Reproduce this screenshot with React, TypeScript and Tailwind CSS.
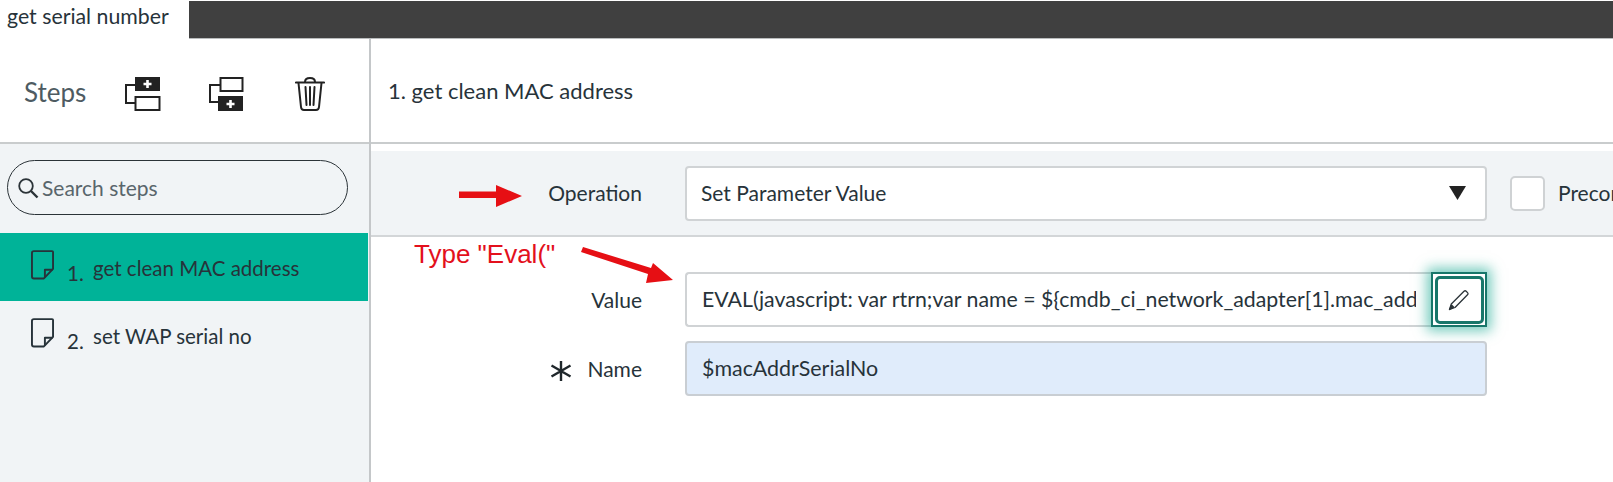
import type { ReactNode } from 'react';

const FONT = "font-['Lato','Noto_Sans',sans-serif]";

function InsertAbove() {
  return (
    <svg width="36" height="34" viewBox="0 0 36 34" fill="none" stroke="#222" strokeWidth="2">
      <rect x="10" y="0" width="25" height="14" fill="#222" stroke="none" />
      <path d="M22.500 3v8M18.500 7h8" stroke="#fff" strokeWidth="2.600" />
      <rect x="10.500" y="20" width="24" height="13" />
      <path d="M10 8H1v18h9" />
    </svg>
  );
}

function InsertBelow() {
  return (
    <svg width="36" height="34" viewBox="0 0 36 34" fill="none" stroke="#222" strokeWidth="2">
      <rect x="11.500" y="1" width="22" height="13" />
      <rect x="9" y="19" width="25" height="15" fill="#222" stroke="none" />
      <path d="M21.500 23v8M17.500 27h8" stroke="#fff" strokeWidth="2.600" />
      <path d="M11 8H1v17h8" />
    </svg>
  );
}

function Trash() {
  return (
    <svg width="30" height="34" viewBox="0 0 30 34" fill="none" stroke="#222" strokeWidth="2" strokeLinecap="round" strokeLinejoin="round">
      <path d="M1 5.500h28" strokeWidth="2.200" />
      <path d="M10 5C10 2 12 1 15 1s5 1 5 4" />
      <path d="M3.500 6l2.500 24c.2 2 1.300 3 3 3h12c1.700 0 2.800-1 3-3l2.500-24" />
      <path d="M10.500 10l1 18M15 10v18M19.500 10l-1 18" />
    </svg>
  );
}

function PageIcon() {
  return (
    <svg width="23" height="30" viewBox="0 0 24 31" fill="none" stroke="#27333a" strokeWidth="2" strokeLinejoin="round">
      <path d="M3 1h19a1 1 0 0 1 1 1v17.500L13.500 29.500H3a2 2 0 0 1-2-2V3a2 2 0 0 1 2-2z" />
      <path d="M22.500 20.500h-8v8" />
    </svg>
  );
}

function SearchIcon() {
  return (
    <svg width="22" height="22" viewBox="0 0 22 22" fill="none" stroke="#2b3338" strokeWidth="1.800">
      <circle cx="9" cy="9" r="6.800" />
      <path d="M14 14l6.500 6.500" strokeWidth="2.400" />
    </svg>
  );
}

function Pencil() {
  return (
    <svg width="22" height="22" viewBox="0 0 22 22" fill="none" stroke="#2b3338" strokeWidth="1.300" strokeLinejoin="round">
      <path d="M1.500 20.500l1.800-5.500L16 2.300c.7-.7 1.500-.7 2.200 0l1.300 1.300c.7.7.7 1.500 0 2.200L7 18.500z" />
      <path d="M1.500 20.500l2.200-4.300 2 2z" fill="#2b3338" />
    </svg>
  );
}

function RequiredMark() {
  return (
    <svg width="22" height="20" viewBox="0 0 22 20" fill="none" stroke="#1f272b" strokeWidth="2.400" className="mt-[5px]">
      <path d="M11 0v20M1.500 4.500l19 11M20.500 4.500l-19 11" />
    </svg>
  );
}

function Step({ n, label, active }: { n: string; label: string; active?: boolean }) {
  return (
    <div className={`flex h-[68px] w-[368px] items-start pl-[31px] pt-[17px] text-[20.500px] text-[#27333a] ${active ? 'bg-[#00b398]' : ''}`}>
      <PageIcon />
      <span className="ml-[13px] mt-[8px] w-[26px]">{n}</span>
      <span className="mt-[3px] whitespace-nowrap">{label}</span>
    </div>
  );
}

function FieldRow({ label, required, className, children }: { label: string; required?: boolean; className?: string; children: ReactNode }) {
  return (
    <div className={`flex items-center ${className ?? ''}`}>
      <div className="flex w-[271px] shrink-0 items-center justify-end gap-[15px] text-[21px] text-[#27333a]">
        {required && <RequiredMark />}
        <span>{label}</span>
      </div>
      <div className="ml-[43px] flex min-w-0">{children}</div>
    </div>
  );
}

export default function App() {
  return (
    <div className={`relative flex h-[482px] w-[1613px] flex-col overflow-hidden bg-white ${FONT}`}>
      <div className="flex h-[39px] shrink-0">
        <div className="flex w-[189px] items-start pl-[7px] pt-[1px] text-[21.300px] text-[#27333a]">get serial number</div>
        <div className="mt-[1px] flex-1 border-b border-[#b9bcbd] bg-[#404040]" />
      </div>

      <div className="flex min-h-0 flex-1">
        <div className="flex w-[371px] shrink-0 flex-col border-r-2 border-[#c4c7c9]">
          <div className="flex h-[105px] shrink-0 items-center border-b-2 border-[#c9cccd] pl-[24px] pt-[6px]">
            <span className="w-[101px] pb-[3px] text-[26px] text-[#4e5b62]">Steps</span>
            <InsertAbove />
            <span className="w-[48px]" />
            <InsertBelow />
            <span className="w-[50px]" />
            <Trash />
          </div>
          <div className="flex-1 bg-[#f1f4f6] pt-[16px]">
            <div className="ml-[7px] flex h-[55px] w-[341px] items-center gap-[3px] rounded-full border-[1.500px] border-[#2b3338] pl-[9px] text-[21px] text-[#59666c]">
              <SearchIcon />
              <span className="pt-[1px]">Search steps</span>
            </div>
            <div className="mt-[18px]">
              <Step n="1." label="get clean MAC address" active />
              <Step n="2." label="set WAP serial no" />
            </div>
          </div>
        </div>

        <div className="flex min-w-0 flex-1 flex-col">
          <div className="flex h-[105px] shrink-0 items-center border-b-2 border-[#c9cccd] pl-[17px] text-[22px] text-[#27333a]">
            1. get clean MAC address
          </div>

          <div className="mt-[7px] flex h-[86px] shrink-0 items-center border-b-2 border-[#d3d6d8] bg-[#f1f4f6]">
            <FieldRow label="Operation">
              <div className="flex h-[55px] w-[802px] items-center justify-between rounded-[4px] border-2 border-[#d0d3d5] bg-white pl-[14px] pr-[19px] text-[21px] text-[#27333a]">
                <span>Set Parameter Value</span>
                <svg width="17" height="14" viewBox="0 0 17 14"><path d="M0 0h17L8.500 14z" fill="#222" /></svg>
              </div>
              <div className="ml-[23px] h-[35px] w-[35px] shrink-0 self-center rounded-[5px] border-2 border-[#cfd2d4] bg-white" />
              <span className="ml-[13px] self-center whitespace-nowrap text-[21px] text-[#27333a]">Precondition</span>
            </FieldRow>
          </div>

          <FieldRow label="Value" className="mt-[35px]">
            <div className="flex h-[55px] w-[746px] items-center overflow-hidden rounded-l-[4px] border-2 border-r-0 border-[#d0d3d5] bg-white pl-[15px] pr-[15px] text-[21.300px] text-[#27333a]">
              <span className="block overflow-hidden whitespace-nowrap">EVAL(javascript: var rtrn;var name = {'${cmdb_ci_network_adapter[1].mac_address}'}</span>
            </div>
            <div className="flex h-[55px] w-[56px] shrink-0 items-center justify-center border-2 border-[#17776a] bg-white shadow-[0_0_12px_4px_rgba(0,160,135,0.55)]">
              <div className="flex h-[48px] w-[49px] items-center justify-center rounded-[5px] border-[3px] border-[#17776a]">
                <Pencil />
              </div>
            </div>
          </FieldRow>

          <FieldRow label="Name" required className="mt-[14px]">
            <div className="flex h-[55px] w-[802px] items-center rounded-[4px] border-2 border-[#c9ced3] bg-[#e0ecfb] pl-[15px] text-[21.400px] text-[#27333a]">
              $macAddrSerialNo
            </div>
          </FieldRow>
        </div>
      </div>

      <span className="absolute left-[414px] top-[238px] font-['Liberation_Sans',sans-serif] text-[26px] leading-[32px] text-[#e3101c]">Type "Eval("</span>

      <svg className="absolute left-[455px] top-[180px]" width="72" height="32" viewBox="0 0 72 32">
        <path d="M4 11.500h37V5l26 11-26 11v-9H4z" fill="#e60f14" />
      </svg>
      <svg className="absolute left-[575px] top-[240px]" width="110" height="50" viewBox="0 0 110 50">
        <path d="M8 7l68 21 2-5 20 17-27 3 2-9L6 12z" fill="#e60f14" />
      </svg>
    </div>
  );
}
